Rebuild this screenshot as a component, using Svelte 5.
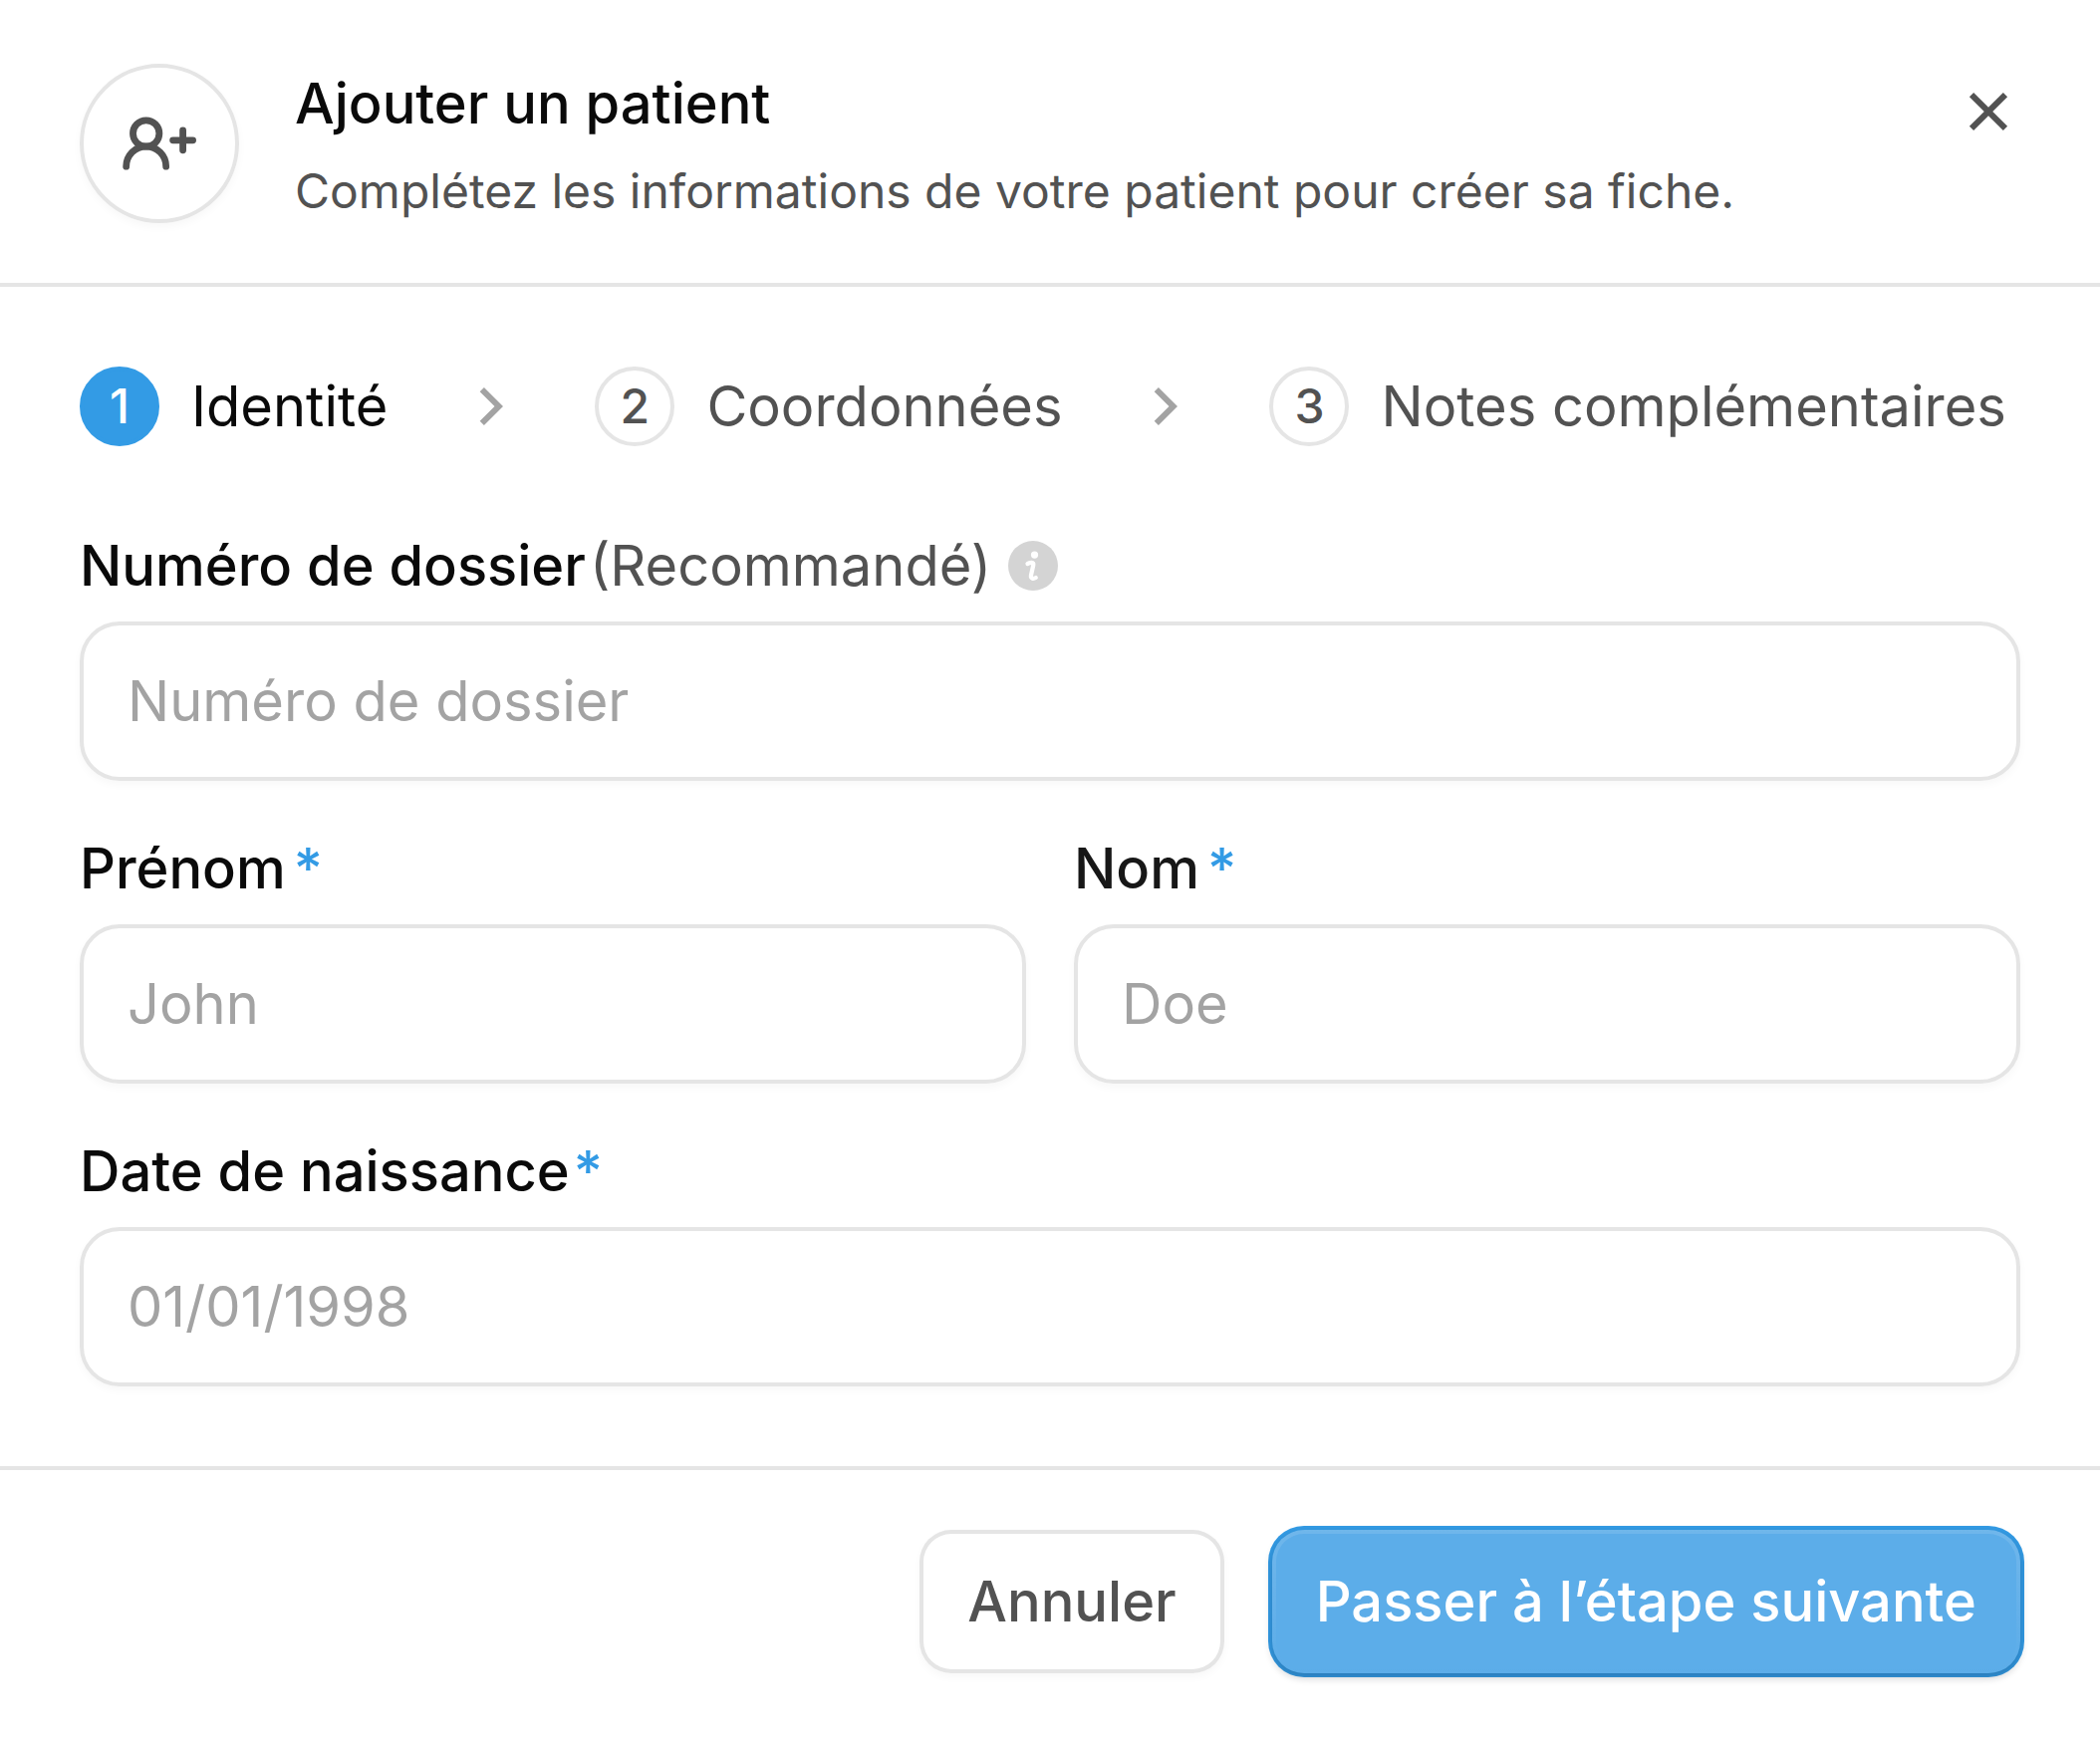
<script lang="ts">
  interface Step {
    id: number;
    label: string;
  }

  const steps: Step[] = [
    { id: 1, label: 'Identité' },
    { id: 2, label: 'Coordonnées' },
    { id: 3, label: 'Notes complémentaires' },
  ];

  let currentStep = $state(1);
  let patient = $state({
    fileNumber: '',
    firstName: '',
    lastName: '',
    birthDate: '',
  });

  function nextStep(event: SubmitEvent) {
    event.preventDefault();
    if (currentStep < steps.length) currentStep += 1;
  }
</script>

<form class="modal" onsubmit={nextStep}>
  <header class="header">
    <div class="avatar">
      <svg viewBox="0 0 24 24" fill="none" stroke="currentColor" stroke-linecap="round" aria-hidden="true">
        <circle cx="8.67" cy="9.5" r="3.3" />
        <path d="M3.67 17.8a5 5.05 0 0 1 10 0" />
        <path d="M17.9 8.7v5M15.4 11.2h5" />
      </svg>
    </div>
    <div class="heading">
      <h1>Ajouter un patient</h1>
      <p>Complétez les informations de votre patient pour créer sa fiche.</p>
    </div>
    <button type="button" class="close" aria-label="Fermer">
      <svg viewBox="0 0 24 24" fill="currentColor" aria-hidden="true">
        <path d="M12 10.586l4.95-4.95 1.414 1.414-4.95 4.95 4.95 4.95-1.414 1.414-4.95-4.95-4.95 4.95-1.414-1.414 4.95-4.95-4.95-4.95L7.05 5.636z" />
      </svg>
    </button>
  </header>

  <div class="body">
    <ol class="steps">
      {#each steps as step, i (step.id)}
        {#if i > 0}
          <li class="separator" aria-hidden="true">
            <svg viewBox="0 0 24 24" fill="currentColor">
              <path d="M13.172 12L8.222 7.05l1.414-1.414L16 12l-6.364 6.364-1.414-1.414z" />
            </svg>
          </li>
        {/if}
        <li class="step" class:active={step.id === currentStep}>
          <span class="step-number">{step.id}</span>
          <span>{step.label}</span>
        </li>
      {/each}
    </ol>

    <div class="fields">
      <div class="field wide">
        <div class="label-row tight">
          <label for="file-number">Numéro de dossier</label>
          <span class="optional">(Recommandé)</span>
          <svg class="info" viewBox="0 0 24 24" aria-hidden="true">
            <circle cx="12" cy="12" r="10" fill="#d4d4d4" />
            <circle cx="12.6" cy="7.6" r="1.45" fill="#fff" />
            <path d="M9.8 11.2C10.9 10.7 12.4 10.4 12.1 11.8L11.2 15.8C10.9 17.3 12.2 17.3 13.1 16.8" fill="none" stroke="#fff" stroke-width="1.7" stroke-linecap="round" />
          </svg>
        </div>
        <input id="file-number" type="text" placeholder="Numéro de dossier" bind:value={patient.fileNumber} />
      </div>

      <div class="field">
        <div class="label-row">
          <label for="first-name">Prénom</label>
          <span class="required">*</span>
        </div>
        <input id="first-name" type="text" placeholder="John" bind:value={patient.firstName} />
      </div>

      <div class="field">
        <div class="label-row">
          <label for="last-name" class="soft">Nom</label>
          <span class="required">*</span>
        </div>
        <input id="last-name" type="text" placeholder="Doe" bind:value={patient.lastName} />
      </div>

      <div class="field wide">
        <div class="label-row tight">
          <label for="birth-date">Date de naissance</label>
          <span class="required">*</span>
        </div>
        <input id="birth-date" type="text" placeholder="01/01/1998" bind:value={patient.birthDate} />
      </div>
    </div>
  </div>

  <footer class="footer">
    <button type="button" class="btn btn-stroke">Annuler</button>
    <button type="submit" class="btn btn-primary">Passer à l’étape suivante</button>
  </footer>
</form>

<style>
  :global(body) {
    background: #fff;
  }

  .modal {
    --strong: #0a0a0a;
    --sub: #525252;
    --soft: #a3a3a3;
    --stroke: #e5e5e5;
    --primary: #339be5;
    --shadow-xs: 0 4px 8px rgba(10, 13, 20, 0.03);

    font-family: Inter, sans-serif;
    font-size: 56px;
    font-optical-sizing: none;
    line-height: 80px;
    color: var(--strong);
  }

  .modal * {
    box-sizing: border-box;
  }

  /* Header */
  .header {
    display: flex;
    align-items: flex-start;
    gap: 56px;
    padding: 64px 64px 60px 80px;
    border-bottom: 4px solid var(--stroke);
  }

  .avatar {
    display: flex;
    align-items: center;
    justify-content: center;
    flex-shrink: 0;
    width: 160px;
    height: 160px;
    border: 4px solid var(--stroke);
    border-radius: 50%;
    color: var(--sub);
    box-shadow: var(--shadow-xs);
  }

  .avatar svg {
    width: 96px;
    height: 96px;
    stroke-width: 1.7;
  }

  .heading {
    display: flex;
    flex-direction: column;
    flex: 1;
    gap: 16px;
  }

  h1 {
    margin: 0;
    font-size: 56px;
    font-weight: 500;
  }

  p {
    margin: 0;
    font-size: 48px;
    line-height: 64px;
    color: var(--sub);
  }

  button {
    font: inherit;
    cursor: pointer;
  }

  .close {
    display: flex;
    align-items: center;
    justify-content: center;
    width: 96px;
    height: 96px;
    padding: 0;
    border: 0;
    background: none;
    color: var(--sub);
  }

  .close svg,
  .separator svg {
    width: 72px;
    height: 72px;
  }

  /* Body */
  .body {
    display: flex;
    flex-direction: column;
    gap: 80px;
    padding: 80px;
  }

  .steps {
    display: flex;
    gap: 64px;
    margin: 0;
    padding: 0;
    list-style: none;
    white-space: nowrap;
  }

  .step {
    display: flex;
    align-items: center;
    gap: 32px;
    color: var(--sub);
  }

  .step-number {
    display: flex;
    align-items: center;
    justify-content: center;
    width: 80px;
    height: 80px;
    border: 4px solid var(--stroke);
    border-radius: 50%;
    font-size: 48px;
    font-weight: 500;
    line-height: 64px;
  }

  .step.active {
    color: var(--strong);
  }

  .step.active .step-number {
    border-color: var(--primary);
    background: var(--primary);
    color: #fff;
  }

  .separator {
    display: flex;
    align-items: center;
    justify-content: center;
    width: 80px;
    height: 80px;
    color: var(--soft);
  }

  .fields {
    display: grid;
    grid-template-columns: 1fr 1fr;
    gap: 48px;
  }

  .field {
    display: flex;
    flex-direction: column;
    gap: 16px;
    min-width: 0;
  }

  .wide {
    grid-column: 1 / -1;
  }

  .label-row {
    display: flex;
    align-items: center;
    gap: 8px;
  }

  .label-row.tight {
    gap: 4px;
  }

  label {
    font-weight: 500;
  }

  label.soft {
    color: #171717;
  }

  .optional {
    color: var(--sub);
  }

  .required {
    font-weight: 500;
    color: var(--primary);
  }

  .info {
    width: 60px;
    height: 60px;
    margin-left: 8px;
  }

  input {
    width: 100%;
    height: 160px;
    padding: 0 44px;
    border: 4px solid var(--stroke);
    border-radius: 40px;
    outline: none;
    background: #fff;
    color: var(--strong);
    font: inherit;
    font-optical-sizing: inherit;
    box-shadow: var(--shadow-xs);
  }

  input::placeholder {
    color: var(--soft);
    opacity: 1;
  }

  input:focus {
    border-color: var(--strong);
  }

  /* Footer */
  .footer {
    display: flex;
    justify-content: flex-end;
    gap: 48px;
    padding: 60px 80px 64px;
    border-top: 4px solid var(--stroke);
  }

  .btn {
    height: 144px;
    padding: 0 48px;
    border: 0;
    border-radius: 32px;
    font-weight: 500;
    font-optical-sizing: inherit;
    white-space: nowrap;
  }

  .btn-stroke {
    background: #fff;
    color: var(--sub);
    box-shadow: inset 0 0 0 4px var(--stroke), var(--shadow-xs);
  }

  .btn-primary {
    position: relative;
    padding: 0 44px;
    background: #5cade9;
    color: #fff;
    box-shadow: 0 4px 8px rgba(14, 18, 27, 0.24), 0 0 0 4px var(--primary);
  }

  /* Inner highlight that fades out toward the bottom edge */
  .btn-primary::before {
    content: '';
    position: absolute;
    inset: 0;
    padding: 4px;
    border-radius: inherit;
    background: linear-gradient(rgba(255, 255, 255, 0.12), rgba(255, 255, 255, 0));
    mask: linear-gradient(#000 0 0) content-box exclude, linear-gradient(#000 0 0);
    pointer-events: none;
  }
</style>
